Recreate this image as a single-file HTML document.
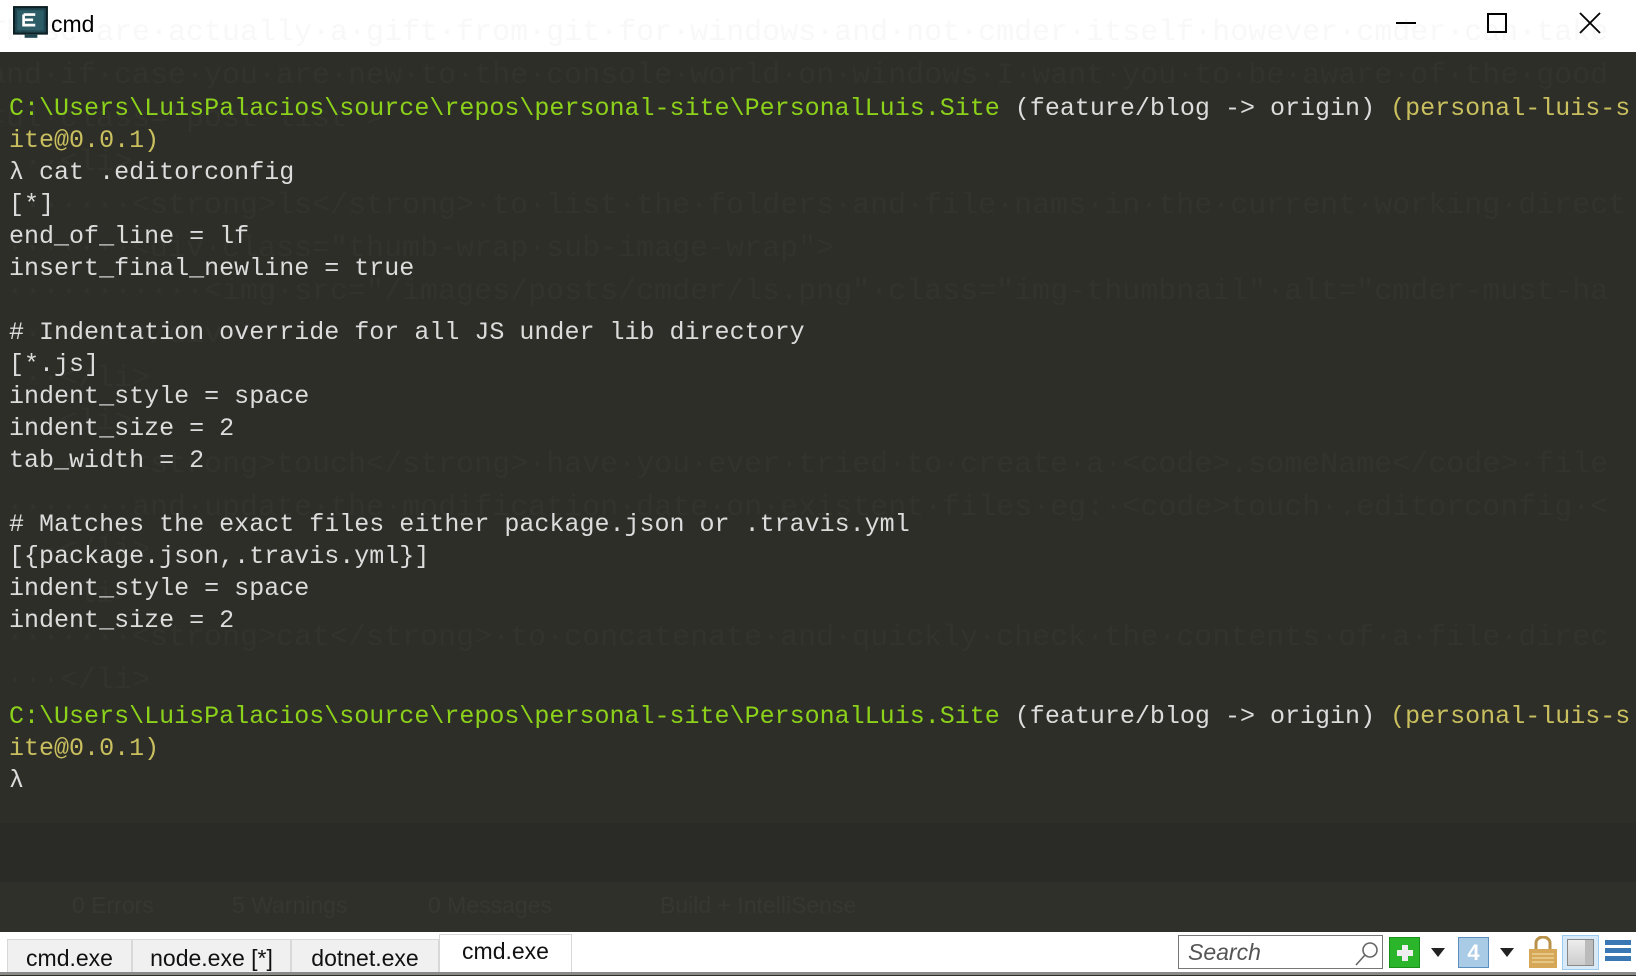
<!DOCTYPE html>
<html><head><meta charset="utf-8"><style>
*{margin:0;padding:0;box-sizing:border-box}
body{width:1636px;height:975px;overflow:hidden;background:#2d2e28;position:relative;font-family:"Liberation Sans",sans-serif}
#title{position:absolute;left:0;top:0;width:1636px;height:52px;background:#fff}
#term{position:absolute;left:9px;top:93px;font-family:"Liberation Mono",monospace;font-size:25.02px;line-height:32px;color:#dcdcdc;white-space:pre}
.g{color:#8cd11a}.y{color:#c9bf5f}
#ghost{position:absolute;left:-12px;top:12px;font-family:"Liberation Mono",monospace;font-size:30px;line-height:43.2px;white-space:pre;color:rgba(128,128,128,0.06)}
#band1{position:absolute;left:0;top:823px;width:1636px;height:59px;background:#2a2b26}
#band2{position:absolute;left:0;top:882px;width:1636px;height:50px;background:#2f302a;color:rgba(255,255,255,0.035);font-size:23px}
#tabs{position:absolute;left:0;top:932px;width:1636px;height:43px;background:#fff;border-bottom:3px solid #8a8a8a}
.tab{position:absolute;top:7px;height:33px;background:#f0f0f0;border:1px solid #d8d8d8;border-bottom:none;font-size:23px;color:#111;text-align:center;line-height:36px}
.tab.a{top:2px;height:38px;background:#fff;line-height:32px}
</style></head><body>
<div id="title">
<svg style="position:absolute;left:13px;top:6px" width="36" height="34" viewBox="0 0 34 32"><rect x="1" y="1" width="31" height="25" fill="#1f4650" stroke="#0c1f24" stroke-width="2"/><rect x="4" y="4" width="25" height="19" fill="#2c5c66"/><path d="M10 8h11M10 8v10h11M10 13h9" stroke="#fff" stroke-width="2.5" fill="none"/><rect x="11" y="27" width="12" height="3" fill="#1f4650"/></svg>
<div style="position:absolute;left:51px;top:11px;font-size:23px;color:#000">cmd</div>
<div style="position:absolute;left:1396px;top:22px;width:20px;height:2px;background:#000"></div>
<div style="position:absolute;left:1487px;top:13px;width:20px;height:20px;border:2px solid #000"></div>
<svg style="position:absolute;left:1579px;top:12px" width="22" height="22"><path d="M1 1L21 21M21 1L1 21" stroke="#000" stroke-width="1.8"/></svg>
</div>
<div id="ghost">These·are·actually·a·gift·from·git·for·windows·and·not·cmder·itself·however·cmder·can·take
and·if·case·you·are·new·to·the·console·world·on·windows·I·want·you·to·be·aware·of·the·good
&lt;ul·class="post-list"&gt;
····&lt;li&gt;
········&lt;strong&gt;ls&lt;/strong&gt;·to·list·the·folders·and·file·nams·in·the·current·working·direct
········&lt;div·class="thumb-wrap·sub-image-wrap"&gt;
············&lt;img·src="/images/posts/cmder/ls.png"·class="img-thumbnail"·alt="cmder-must-ha
········&lt;/div&gt;
····&lt;/li&gt;
····&lt;li&gt;
········&lt;strong&gt;touch&lt;/strong&gt;·have·you·ever·tried·to·create·a·&lt;code&gt;.someName&lt;/code&gt;·file
········and·update·the·modification·date·on·existent·files·eg:·&lt;code&gt;touch·.editorconfig·&lt;
····&lt;/li&gt;
····&lt;li&gt;
········&lt;strong&gt;cat&lt;/strong&gt;·to·concatenate·and·quickly·check·the·contents·of·a·file·direc
····&lt;/li&gt;</div>
<div id="band1"></div>
<div id="band2"><span style="position:absolute;left:72px;top:10px">0 Errors</span><span style="position:absolute;left:232px;top:10px">5 Warnings</span><span style="position:absolute;left:428px;top:10px">0 Messages</span><span style="position:absolute;left:660px;top:10px">Build + IntelliSense</span></div>
<div id="term"><span class="g">C:\Users\LuisPalacios\source\repos\personal-site\PersonalLuis.Site</span> (feature/blog -&gt; origin) <span class="y">(personal-luis-s
ite@0.0.1)</span>
λ cat .editorconfig
[*]
end_of_line = lf
insert_final_newline = true

# Indentation override for all JS under lib directory
[*.js]
indent_style = space
indent_size = 2
tab_width = 2

# Matches the exact files either package.json or .travis.yml
[{package.json,.travis.yml}]
indent_style = space
indent_size = 2


<span class="g">C:\Users\LuisPalacios\source\repos\personal-site\PersonalLuis.Site</span> (feature/blog -&gt; origin) <span class="y">(personal-luis-s
ite@0.0.1)</span>
λ</div>
<div id="tabs">
<div class="tab" style="left:7px;width:125px">cmd.exe</div>
<div class="tab" style="left:132px;width:159px">node.exe [*]</div>
<div class="tab" style="left:291px;width:148px">dotnet.exe</div>
<div class="tab a" style="left:439px;width:133px">cmd.exe</div>
<div style="position:absolute;left:1178px;top:3px;width:205px;height:34px;border:1px solid #777;font-style:italic;color:#555;font-size:23px;padding-left:9px;line-height:32px">Search
<svg style="position:absolute;right:2px;top:3px" width="26" height="28"><circle cx="16" cy="11" r="7" fill="none" stroke="#666" stroke-width="1.6"/><path d="M11 16L2 26" stroke="#666" stroke-width="1.6"/></svg></div>
<div style="position:absolute;left:1389px;top:5px;width:31px;height:31px;background:#2bb52b;border:1px solid #1a8f1a"><div style="position:absolute;left:7px;top:12px;width:16px;height:6px;background:#eee"></div><div style="position:absolute;left:12px;top:7px;width:6px;height:16px;background:#eee"></div></div>
<svg style="position:absolute;left:1431px;top:16px" width="14" height="9"><path d="M0 0H14L7 9Z" fill="#222"/></svg>
<div style="position:absolute;left:1458px;top:5px;width:31px;height:31px;background:#a9cbe6;border:1px solid #5a8fc0;color:#fff;font-size:22px;text-align:center;line-height:30px;font-weight:bold">4</div>
<svg style="position:absolute;left:1500px;top:16px" width="14" height="9"><path d="M0 0H14L7 9Z" fill="#222"/></svg>
<svg style="position:absolute;left:1528px;top:4px" width="30" height="33"><path d="M8 13V7a7 6 0 0 1 14 0v6" fill="none" stroke="#b8924a" stroke-width="3"/><rect x="1" y="13" width="28" height="19" fill="#d6a757"/><path d="M4 18h22M4 22h22M4 26h22" stroke="#f0d8a0" stroke-width="1.2"/></svg>
<div style="position:absolute;left:1562px;top:3px;width:37px;height:35px;background:#d8eaf8;border:1px solid #9ccbee"><div style="position:absolute;left:4px;top:3px;width:27px;height:27px;background:linear-gradient(#eee,#ccc);border:1px solid #888"></div><div style="position:absolute;left:22px;top:4px;width:8px;height:25px;background:#bbb"></div></div>
<div style="position:absolute;left:1605px;top:8px;width:26px;height:5px;background:#3a78b5"></div>
<div style="position:absolute;left:1605px;top:16px;width:26px;height:5px;background:#3a78b5"></div>
<div style="position:absolute;left:1605px;top:24px;width:26px;height:5px;background:#3a78b5"></div>
</div>
</body></html>
